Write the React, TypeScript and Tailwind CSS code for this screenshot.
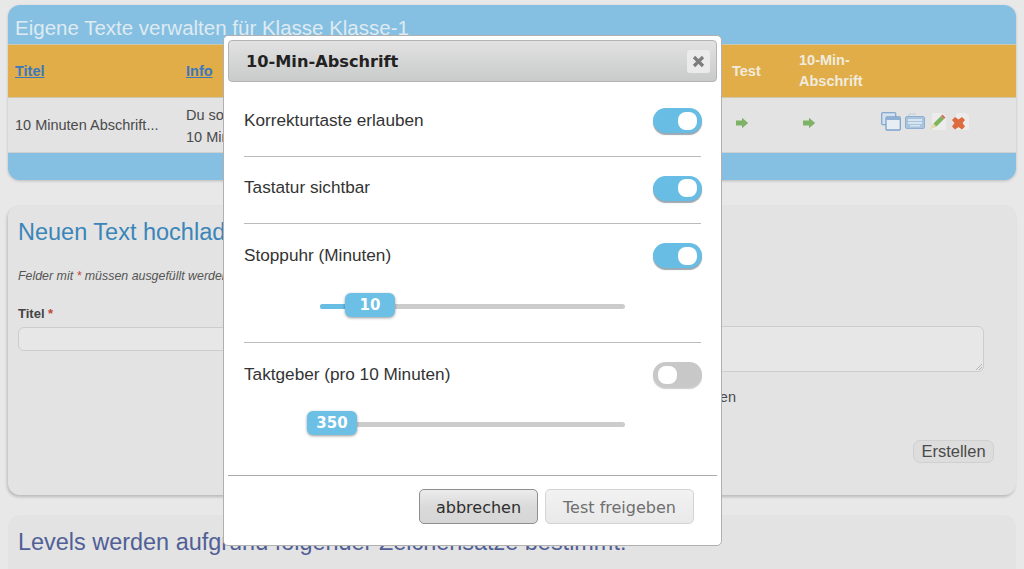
const sans = "font-['Liberation_Sans',Arial,sans-serif]";

function GoArrow() {
  return (
    <svg width="14" height="12" viewBox="0 0 14 12" className="-mt-[6px] opacity-90 blur-[0.3px]">
      <path d="M1 3.500h6V.8L13.2 6 7 11.2V8.500H1z" fill="#74ad5a" />
    </svg>
  );
}

function RowIcons() {
  return (
    <div className="-mt-[10px] flex items-center gap-[4px] blur-[0.4px]">
      {/* windows */}
      <svg width="20" height="19" viewBox="0 0 20 19">
        <rect x="0.7" y="0.7" width="14" height="12" rx="1" fill="#d5e1ec" stroke="#86a9d0" strokeWidth="1.3" />
        <rect x="5" y="5" width="14.3" height="13" rx="1" fill="#e6edf3" stroke="#7ea3cd" strokeWidth="1.3" />
        <rect x="5" y="5" width="14.3" height="3" fill="#8fb0d5" />
      </svg>
      {/* keyboard */}
      <svg width="20" height="16" viewBox="0 0 20 16">
        <path d="M4 3V1h7" fill="none" stroke="#c3cdd8" strokeWidth="1" />
        <rect x="0.5" y="3.500" width="19" height="12" rx="1.500" fill="#a9c4df" stroke="#8fb0d2" />
        <rect x="3" y="6" width="14" height="2" fill="#d8e4ef" />
        <rect x="3" y="9" width="14" height="2" fill="#d8e4ef" />
        <rect x="5" y="12" width="10" height="1.500" fill="#d8e4ef" />
      </svg>
      {/* edit */}
      <svg width="18" height="19" viewBox="0 0 18 19">
        <path d="M3 1h11l3 3v14H3z" fill="#ececec" />
        <path d="M3 16l2-5 7-7 3 3-7 7z" fill="#7fb35c" />
        <path d="M12 4l1.500-1.500 3 3L15 7z" fill="#d0705a" />
        <path d="M1 18l3-7 3 3z" fill="#e8d9a8" />
      </svg>
      {/* delete */}
      <svg width="19" height="19" viewBox="0 0 19 19">
        <path d="M5 1h10l3 3v14H5z" fill="#ececec" />
        <path d="M1 8l3-3 3.500 2.500L11 5l3 3-2.500 3 2.500 3.500-3 3L7.500 15 4 17.500l-3-3L3.500 11z" fill="#dd6b3d" />
      </svg>
    </div>
  );
}

function Toggle({ on }: { on: boolean }) {
  return (
    <div
      className={
        on
          ? "-mr-[1px] flex h-[25px] w-[49px] items-center justify-end rounded-[13px] bg-[#67bde3] pr-[5px] shadow-[0_2px_1px_rgba(90,110,125,0.6)]"
          : "-mr-[1px] flex h-[25px] w-[49px] items-center justify-start rounded-[13px] bg-[#c8c8c8] pl-[5px] shadow-[0_2px_1px_rgba(170,170,170,0.6)]"
      }
    >
      <div className="h-[18px] w-[19px] rounded-[8px] bg-white" />
    </div>
  );
}

function Slider({ value, left, fill }: { value: string; left: string; fill: boolean }) {
  return (
    <div className="relative ml-[76px] h-[5px] w-[305px] rounded-full bg-[#cccccc]">
      {fill && <div className="h-[5px] w-[30px] rounded-l-full bg-[#67bde3]" />}
      <div
        className={`absolute top-[-11px] ${left} flex h-[24px] w-[50px] items-center justify-center rounded-[6px] bg-[#6cc0e5] font-['DejaVu_Sans',sans-serif] text-[15px] font-bold text-white shadow-[0_1px_3px_rgba(0,0,0,0.4)]`}
      >
        {value}
      </div>
    </div>
  );
}

function Dialog() {
  return (
    <div className="absolute top-[35px] left-[223px] flex h-[511px] w-[499px] flex-col rounded-[5px] border border-[#b0b0b0] bg-white p-[4px] text-[#333333]">
      <div className="flex h-[42px] shrink-0 items-center justify-between rounded-[4px] border border-[#b4b4b4] bg-gradient-to-b from-[#e2e2e2] to-[#c9caca] pr-[6px] pl-[17px]">
        <span className="mt-[2px] font-['DejaVu_Sans',sans-serif] text-[16.2px] font-bold text-[#222222]">10-Min-Abschrift</span>
        <div className="flex h-[23px] w-[23px] items-center justify-center rounded-[3px] bg-[#ebebeb]">
          <svg width="13" height="13" viewBox="0 0 13 13">
            <path d="M2 2l9 9M11 2l-9 9" stroke="#7d7d7d" strokeWidth="3.200" />
          </svg>
        </div>
      </div>

      <div className={`flex-1 px-[16px] text-[17.2px] ${sans}`}>
        <div className="flex h-[75px] items-center justify-between border-b border-[#bbbbbb] pt-[3px]">
          <span>Korrekturtaste erlauben</span>
          <Toggle on />
        </div>
        <div className="flex h-[67px] items-center justify-between border-b border-[#bbbbbb] pb-[4px]">
          <span>Tastatur sichtbar</span>
          <Toggle on />
        </div>
        <div className="h-[119px] border-b border-[#bbbbbb] pt-[19px]">
          <div className="flex items-center justify-between">
            <span>Stoppuhr (Minuten)</span>
            <Toggle on />
          </div>
          <div className="mt-[35px]">
            <Slider value="10" left="left-[25px]" fill />
          </div>
        </div>
        <div className="pt-[19px]">
          <div className="flex items-center justify-between">
            <span>Taktgeber (pro 10 Minuten)</span>
            <Toggle on={false} />
          </div>
          <div className="mt-[34px]">
            <Slider value="350" left="left-[-13px]" fill={false} />
          </div>
        </div>
      </div>

      <div className="flex h-[66px] shrink-0 items-start justify-end gap-[7px] border-t border-[#aaaaaa] pt-[13px] pr-[23px] font-['DejaVu_Sans',sans-serif] text-[16px]">
        <div className="flex h-[35px] w-[119px] items-center justify-center rounded-[5px] border border-[#8e8e8e] bg-gradient-to-b from-[#ececec] via-[#dadada] to-[#d6d6d6] pt-[2px] text-[#2e2e2e]">
          abbrechen
        </div>
        <div className="flex h-[35px] w-[149px] items-center justify-center rounded-[5px] border border-[#d4d4d4] bg-gradient-to-b from-[#f2f2f2] to-[#e9e9e9] pt-[2px] text-[#6f6f6f]">
          Test freigeben
        </div>
      </div>
    </div>
  );
}

export default function App() {
  return (
    <div className={`relative h-[569px] w-[1024px] overflow-hidden bg-[#e8e8e8] px-[8px] pt-[5px] ${sans}`}>
      {/* Text table */}
      <div className="overflow-hidden rounded-[12px] bg-[#85c0e3] shadow-[0_1px_3px_rgba(0,0,0,0.2)]">
        <div className="h-[39px] pl-[7px] text-[20.5px] leading-[46px] text-[#dfeaf1]">
          Eigene Texte verwalten für Klasse Klasse-1
        </div>
        <div className="flex h-[54px] items-center border-y border-[#cfc6ae] bg-[#e0ad48] pt-[2px] text-[14.5px] font-bold text-[#f1ebdf]">
          <a className="ml-[7px] w-[171px] text-[#3a78c0] underline">Titel</a>
          <a className="w-[546px] text-[#3a78c0] underline">Info</a>
          <span className="w-[67px]">Test</span>
          <span className="-mt-[2px] w-[82px] leading-[21px]">10-Min-<br />Abschrift</span>
        </div>
        <div className="flex h-[55px] items-center border-b border-[#cfcfcf] bg-[#e3e3e3] pt-[2px] text-[14.5px] text-[#4a4a4a]">
          <span className="ml-[7px] w-[171px]">10 Minuten Abschrift...</span>
          <div className="w-[546px] leading-[22px]">Du sollst<br />10 Minuten</div>
          <div className="w-[67px] pl-[3px]"><GoArrow /></div>
          <div className="w-[82px] pl-[3px]"><GoArrow /></div>
          <RowIcons />
        </div>
        <div className="h-[27px]" />
      </div>

      {/* Upload form */}
      <div className="mt-[25px] h-[290px] rounded-[12px] bg-[#e3e3e3] px-[10px] pt-[13px] shadow-[-1px_2px_3px_rgba(0,0,0,0.2)]">
        <h2 className="text-[23.5px] leading-[28px] text-[#3a86b9]">Neuen Text hochladen</h2>
        <p className="mt-[21px] text-[12.4px] text-[#555555] italic">
          Felder mit <span className="text-[#c0483c]">*</span> müssen ausgefüllt werden
        </p>
        <div className="mt-[21px] flex gap-[10px]">
          <div className="w-[482px]">
            <div className="text-[13px] leading-[14px] font-bold text-[#444444]">
              Titel <span className="text-[#c0483c]">*</span>
            </div>
            <div className="mt-[6px] h-[24px] rounded-[6px] border border-[#cccccc] bg-[#e7e7e7]" />
          </div>
          <div className="flex-1">
            <div className="relative mt-[19px] mr-[22px] h-[46px] rounded-[6px] border border-[#cccccc] bg-[#e7e7e7]">
              <svg width="6" height="6" viewBox="0 0 6 6" className="absolute right-[1px] bottom-[1px]">
                <path d="M0 6l6-6M3 6l3-3" stroke="#a8a8a8" strokeWidth="0.8" />
              </svg>
            </div>
            <div className="mt-[16px] w-[226px] text-right text-[14.5px] leading-[18px] text-[#4a4a4a]">Leerzeichen</div>
            <div className="mt-[34px] flex justify-end pr-[12px]">
              <div className="flex h-[23px] w-[81px] items-center justify-center rounded-[7px] border border-[#d0d0d0] bg-[#dddddd] text-[16.5px] text-[#4a4a4a]">
                Erstellen
              </div>
            </div>
          </div>
        </div>
      </div>

      {/* Levels */}
      <div className="mt-[20px] h-[80px] rounded-[12px] bg-[#e3e3e3] px-[10px] pt-[13px]">
        <h2 className="text-[23.45px] leading-[28px] text-[#505f96]">
          Levels werden aufgrund folgender Zeichensätze bestimmt:
        </h2>
      </div>

      <Dialog />
    </div>
  );
}
